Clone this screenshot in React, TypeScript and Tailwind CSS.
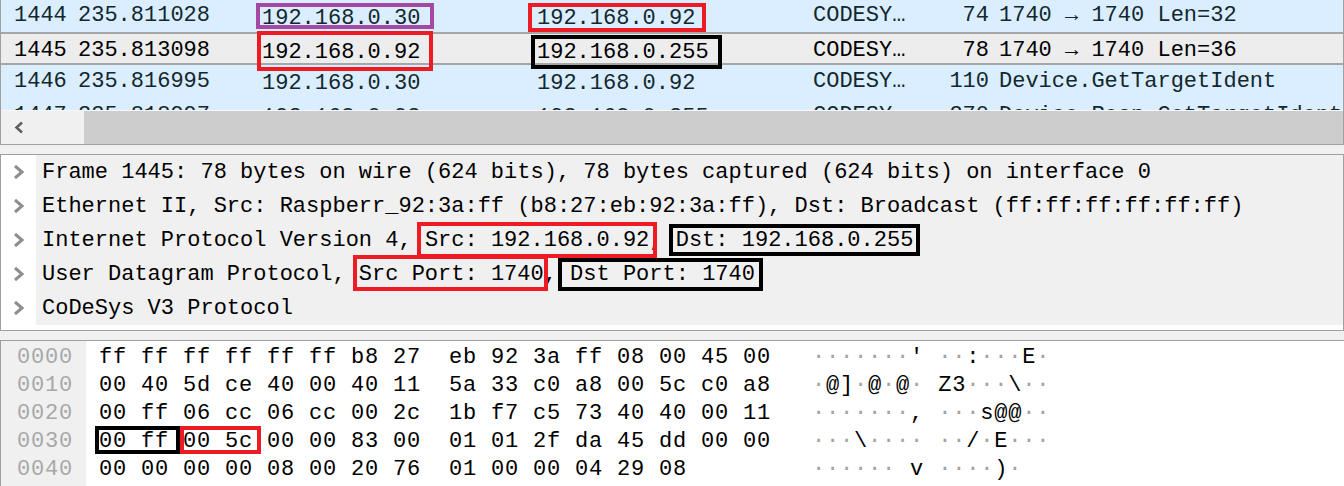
import React from "react";

type Node = React.ReactNode;

function Chevron() {
  return (
    <svg width="12" height="16" viewBox="0 0 12 16" className="block">
      <polyline points="2,2 9,8 2,14" fill="none" stroke="#8e8e8e" strokeWidth="3" strokeLinejoin="miter" />
    </svg>
  );
}

function LeftArrow() {
  return (
    <svg width="10" height="13" viewBox="0 0 10 13" className="block">
      <polyline points="8,1.5 2.5,6.5 8,11.5" fill="none" stroke="#5f5f5f" strokeWidth="2.6" />
    </svg>
  );
}

function PRow({
  rowCls,
  lead,
  no,
  time,
  src,
  dst,
  len,
  info,
  srcBox,
  dstBox,
}: {
  rowCls: string;
  lead: string;
  no: string;
  time: string;
  src: string;
  dst: string;
  len: string;
  info: string;
  srcBox?: Node;
  dstBox?: Node;
}) {
  return (
    <div className={"flex shrink-0 items-start whitespace-pre " + rowCls}>
      <span className={"w-[77px] shrink-0 pl-[13px] " + lead}>{no}</span>
      <span className={"w-[184px] shrink-0 " + lead}>{time}</span>
      <span className="w-[275px] shrink-0">
        <span className={"relative inline-block " + lead}>
          {src}
          {srcBox}
        </span>
      </span>
      <span className="w-[276px] shrink-0">
        <span className={"relative inline-block " + lead}>
          {dst}
          {dstBox}
        </span>
      </span>
      <span className={"w-[102px] shrink-0 " + lead}>CODESY…</span>
      <span className={"w-[74px] shrink-0 text-right " + lead}>{len}</span>
      <span className={"pl-[10px] " + lead}>{info}</span>
    </div>
  );
}

function DRow({ children }: { children: Node }) {
  return (
    <div className="flex h-[34px] shrink-0">
      <div className="flex w-[35px] shrink-0 items-center bg-white pl-[12px]">
        <Chevron />
      </div>
      <div className="flex-1 whitespace-pre bg-[#f0f0f0] pt-[2px] pl-[6px] leading-[32px] text-black">{children}</div>
    </div>
  );
}

const offsets = ["0000", "0010", "0020", "0030", "0040"];
const asciiRows = [
  "·······' ··:···E·",
  "·@]·@·@· Z3···\\··",
  "·······, ···s@@··",
  "···\\···· ··/·E···",
  "······ v ····)·",
];

function Ascii({ s }: { s: string }) {
  return (
    <>
      {s.split("").map((c, i) =>
        c === "·" ? (
          <span key={i} className="text-[#a3a3a3]">
            ·
          </span>
        ) : (
          <span key={i}>{c}</span>
        )
      )}
    </>
  );
}

export default function App() {
  return (
    <div className="flex h-[486px] w-[1344px] flex-col overflow-hidden bg-[#f0f0f0] font-['Liberation_Mono','DejaVu_Sans_Mono',monospace] text-[22px]">
      {/* Packet list */}
      <div className="flex h-[145px] shrink-0 flex-col border-x border-b border-[#a0a0a0] bg-white text-[#12272e]">
        <div className="flex h-[110px] shrink-0 flex-col overflow-hidden">
          <PRow
            rowCls="h-[32px] pt-[2px] bg-[#daeeff]"
            lead="leading-[28px]"
            no="1444"
            time="235.811028"
            src="192.168.0.30"
            dst="192.168.0.92"
            len="74"
            info="1740 → 1740 Len=32"
            srcBox={<span className="pointer-events-none absolute -top-[2px] bottom-[4px] -left-[6px] -right-[14px] border-4 border-[#a349a4]" />}
            dstBox={<span className="pointer-events-none absolute -top-[2px] bottom-[1px] -left-[9px] -right-[11px] border-4 border-[#ed1c24]" />}
          />
          <PRow
            rowCls="h-[33px] pt-[2px] border-y-2 border-[#a6a6a6] bg-[#ededed] text-black"
            lead="leading-[29px]"
            no="1445"
            time="235.813098"
            src="192.168.0.92"
            dst="192.168.0.255"
            len="78"
            info="1740 → 1740 Len=36"
            srcBox={<span className="pointer-events-none absolute -top-[7px] -bottom-[4px] -left-[5px] -right-[13px] border-4 border-[#ed1c24]" />}
            dstBox={<span className="pointer-events-none absolute -top-[3px] -bottom-[2px] -left-[6px] -right-[13px] border-4 border-black" />}
          />
          <PRow
            rowCls="h-[34px] pt-[2px] bg-[#daeeff]"
            lead="leading-[29px]"
            no="1446"
            time="235.816995"
            src="192.168.0.30"
            dst="192.168.0.92"
            len="110"
            info="Device.GetTargetIdent"
          />
          <PRow
            rowCls="h-[34px] pt-[2px] bg-[#daeeff]"
            lead="leading-[30px]"
            no="1447"
            time="235.818997"
            src="192.168.0.92"
            dst="192.168.0.255"
            len="270"
            info="Device.Resp.GetTargetIdent"
          />
        </div>
        <div className="flex h-[34px] shrink-0 border-t border-[#f7f7f7]">
          <div className="flex w-[83px] shrink-0 items-center bg-[#f0f0f0] pl-[13px]">
            <LeftArrow />
          </div>
          <div className="flex-1 bg-[#cdcdcd]" />
        </div>
      </div>

      <div className="h-[9px] shrink-0" />

      {/* Packet details */}
      <div className="flex h-[177px] shrink-0 flex-col border border-[#a0a0a0] bg-white">
        <DRow>Frame 1445: 78 bytes on wire (624 bits), 78 bytes captured (624 bits) on interface 0</DRow>
        <DRow>Ethernet II, Src: Raspberr_92:3a:ff (b8:27:eb:92:3a:ff), Dst: Broadcast (ff:ff:ff:ff:ff:ff)</DRow>
        <DRow>
          {"Internet Protocol Version 4, "}
          <span className="relative inline-block leading-[32px]">
            Src: 192.168.0.92
            <span className="pointer-events-none absolute -top-[3px] -bottom-[1px] -left-[8px] -right-[8px] border-4 border-[#ed1c24]" />
          </span>
          {", "}
          <span className="relative inline-block leading-[32px]">
            Dst: 192.168.0.255
            <span className="pointer-events-none absolute -top-[1px] bottom-[1px] -left-[7px] -right-[7px] border-4 border-black" />
          </span>
        </DRow>
        <DRow>
          {"User Datagram Protocol, "}
          <span className="relative inline-block leading-[32px]">
            Src Port: 1740
            <span className="pointer-events-none absolute -top-[4px] bottom-0 -left-[6px] -right-[4px] border-4 border-[#ed1c24]" />
          </span>
          {", "}
          <span className="relative inline-block leading-[32px]">
            Dst Port: 1740
            <span className="pointer-events-none absolute -top-[1px] bottom-0 -left-[12px] -right-[8px] border-4 border-black" />
          </span>
        </DRow>
        <DRow>CoDeSys V3 Protocol</DRow>
      </div>

      <div className="h-[9px] shrink-0" />

      {/* Bytes pane */}
      <div className="flex min-h-0 flex-1 border-t border-l border-[#a0a0a0] bg-white tracking-[0.8px] text-black">
        <div className="flex w-[85px] shrink-0 flex-col bg-[#f0f0f0] pt-[3px] pl-[16px] text-[#a8a8a8]">
          {offsets.map((o) => (
            <div key={o} className="h-[28px] shrink-0 leading-[28px]">
              {o}
            </div>
          ))}
        </div>
        <div className="flex w-[726px] shrink-0 flex-col whitespace-pre pt-[3px] pl-[13px]">
          <div className="h-[28px] shrink-0 leading-[28px]">ff ff ff ff ff ff b8 27  eb 92 3a ff 08 00 45 00</div>
          <div className="h-[28px] shrink-0 leading-[28px]">00 40 5d ce 40 00 40 11  5a 33 c0 a8 00 5c c0 a8</div>
          <div className="h-[28px] shrink-0 leading-[28px]">00 ff 06 cc 06 cc 00 2c  1b f7 c5 73 40 40 00 11</div>
          <div className="h-[28px] shrink-0 leading-[28px]">
            <span className="relative inline-block leading-[28px]">
              00 ff
              <span className="pointer-events-none absolute -top-[2px] bottom-[2px] -left-[4px] -right-[11px] border-4 border-black" />
            </span>
            {" "}
            <span className="relative inline-block leading-[28px]">
              00 5c
              <span className="pointer-events-none absolute -top-[2px] bottom-[2px] -left-[3px] -right-[8px] border-4 border-[#ed1c24]" />
            </span>
            {" 00 00 83 00  01 01 2f da 45 dd 00 00"}
          </div>
          <div className="h-[28px] shrink-0 leading-[28px]">00 00 00 00 08 00 20 76  01 00 00 04 29 08</div>
        </div>
        <div className="flex flex-col whitespace-pre pt-[3px]">
          {asciiRows.map((r, i) => (
            <div key={i} className="h-[28px] shrink-0 leading-[28px]">
              <Ascii s={r} />
            </div>
          ))}
        </div>
      </div>
    </div>
  );
}
